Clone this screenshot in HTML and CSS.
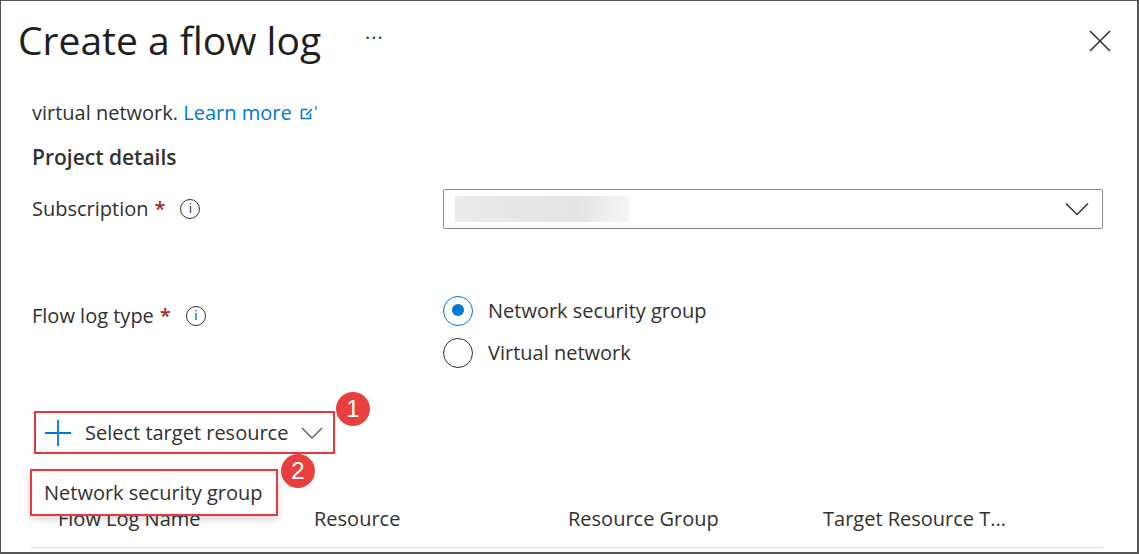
FILE: index.html
```html
<!DOCTYPE html>
<html lang="en">
<head>
<meta charset="utf-8">
<title>Create a flow log</title>
<link rel="stylesheet" href="styles.css">
</head>
<body>
<div class="panel">
  <header class="header">
    <h1 class="title">Create a flow log</h1>
    <span class="more">···</span>
    <span class="spacer"></span>
    <svg class="close" width="22" height="22" viewBox="0 0 22 22"><path d="M1 1L21 21M21 1L1 21" stroke="#323130" stroke-width="1.6" fill="none"/></svg>
  </header>
  <div class="content">
    <p class="desc">virtual network. <a class="link" href="#">Learn more <svg class="ext" width="20" height="16" viewBox="0 0 20 16"><path d="M2.5 4.5h6M2.5 4.5v9h9v-5" stroke="#0078d4" stroke-width="1.6" fill="none"/><path d="M7 10L13 4" stroke="#0078d4" stroke-width="1.6"/><path d="M17 1v4" stroke="#0078d4" stroke-width="1.2"/></svg></a></p>
    <h2 class="section">Project details</h2>
    <div class="row row-sub">
      <div class="label">Subscription <span class="req">*</span><span class="info">i</span></div>
      <div class="control">
        <div class="select">
          <span class="blur"></span>
          <svg class="chev" width="24" height="14" viewBox="0 0 24 14"><path d="M1 1.5L12 12.5L23 1.5" stroke="#323130" stroke-width="1.5" fill="none"/></svg>
        </div>
      </div>
    </div>
    <div class="row row-type">
      <div class="label label-type">Flow log type <span class="req">*</span><span class="info">i</span></div>
      <div class="control radios">
        <div class="radio-item"><span class="radio checked"></span>Network security group</div>
        <div class="radio-item"><span class="radio"></span>Virtual network</div>
      </div>
    </div>
    <div class="target-area">
      <div class="target-btn">
        <svg class="plus" width="26" height="26" viewBox="0 0 26 26"><path d="M13 0v26M0 13h26" stroke="#0078d4" stroke-width="1.8"/></svg>
        <span>Select target resource</span>
        <svg class="chev-small" width="22" height="12" viewBox="0 0 22 12"><path d="M1 1L11 11L21 1" stroke="#605e5c" stroke-width="1.4" fill="none"/></svg>
      </div>
      <span class="badge badge-1">1</span>
      <div class="menu">Network security group</div>
      <span class="badge badge-2">2</span>
    </div>
    <div class="table-head">
      <span class="col col-name">Flow Log Name</span>
      <span class="col col-res">Resource</span>
      <span class="col col-rg">Resource Group</span>
      <span class="col col-tt">Target Resource T...</span>
    </div>
  </div>
</div>
</body>
</html>
```
FILE: styles.css
```css
* { box-sizing: border-box; }
html, body { margin: 0; padding: 0; background: #fff; }
body {
  font-family: "Open Sans", "Noto Sans", sans-serif;
  color: #323130;
}
.panel {
  width: 1139px;
  height: 554px;
  border: 1px solid #555;
  border-right-width: 2px;
  border-bottom-width: 2px;
  overflow: hidden;
  display: flex;
  flex-direction: column;
}
.header {
  display: flex;
  align-items: center;
  height: 80px;
  padding: 0 26px 4px 17px;
}
.title {
  margin: 0;
  font-size: 39px;
  font-weight: 400;
  color: #201f1e;
}
.more {
  margin-left: 44px;
  font-size: 20px;
  letter-spacing: 1px;
  color: #323130;
  padding-bottom: 4px;
}
.spacer { flex: 1; }
.close { display: block; margin-top: 4px; }
.content {
  padding: 0 34px 0 30px;
  flex: 1;
  display: flex;
  flex-direction: column;
}
.desc {
  margin: 18px 0 0 1px;
  font-size: 20px;
  line-height: 28px;
}
.link {
  color: #0078d4;
  text-decoration: none;
}
.ext { vertical-align: -1px; margin-left: 2px; }
.section {
  margin: 16px 0 0 1px;
  font-size: 21px;
  font-weight: 600;
  line-height: 28px;
}
.row {
  display: grid;
  grid-template-columns: 412px 1fr;
}
.row-sub { margin-top: 18px; align-items: center; }
.label {
  font-size: 20px;
  display: flex;
  align-items: center;
  line-height: 28px;
  padding-left: 1px;
}
.req { color: #a4262c; margin-left: 6px; font-weight: 600; }
.info {
  display: inline-flex;
  align-items: center;
  justify-content: center;
  width: 20px;
  height: 20px;
  border: 1.3px solid #323130;
  border-radius: 50%;
  font-size: 12px;
  margin-left: 15px;
  line-height: 1;
  font-family: "DejaVu Sans", sans-serif;
}
.select {
  height: 40px;
  border: 1px solid #8a8886;
  border-radius: 2px;
  display: flex;
  align-items: center;
  padding: 0 13px 0 11px;
}
.blur {
  width: 174px;
  height: 26px;
  background: linear-gradient(90deg, #ececec 0%, #e6e6e6 40%, #e4e4e4 70%, #f6f6f6 100%);
}
.chev { margin-left: auto; }
.row-type { margin-top: 67px; }
.label-type { padding-top: 6px; align-self: start; }
.radios {
  display: flex;
  flex-direction: column;
  gap: 13px;
}
.radio-item {
  display: flex;
  align-items: center;
  font-size: 20px;
  height: 29px;
}
.radio {
  width: 30px;
  height: 30px;
  border-radius: 50%;
  border: 1.4px solid #323130;
  margin-right: 15px;
  position: relative;
  flex: none;
}
.radio.checked { border-color: #0078d4; }
.radio.checked::after {
  content: "";
  position: absolute;
  left: 7.5px;
  top: 7.5px;
  width: 12px;
  height: 12px;
  border-radius: 50%;
  background: #0078d4;
}
.target-area {
  position: relative;
  margin-top: 44px;
  height: 88px;
}
.target-btn {
  display: inline-flex;
  align-items: center;
  margin-left: 3px;
  height: 43px;
  width: 301px;
  border: 2px solid #e8383d;
  padding: 0 0 0 9px;
  font-size: 20px;
  white-space: nowrap;
}
.plus { margin-right: 14px; flex: none; }
.chev-small { margin-left: 13px; flex: none; }
.badge {
  position: absolute;
  width: 34px;
  height: 34px;
  border-radius: 50%;
  background: #e8403f;
  color: #fff;
  font-family: "Liberation Sans", Arial, sans-serif;
  font-size: 24px;
  display: flex;
  align-items: center;
  justify-content: center;
}
.badge-1 { left: 305px; top: -19px; }
.badge-2 { left: 250px; top: 43px; }
.menu {
  position: absolute;
  left: -1px;
  top: 58px;
  width: 248px;
  height: 47px;
  border: 2px solid #e8383d;
  background: #fff;
  box-shadow: 0 3px 8px rgba(0,0,0,0.18);
  font-size: 20px;
  display: flex;
  align-items: center;
  padding-left: 12px;
  white-space: nowrap;
  z-index: 2;
}
.table-head {
  display: flex;
  font-size: 20px;
  border-bottom: 1px solid #e1dfdd;
  height: 43px;
  align-items: flex-start;
  margin-top: 6px;
}
.col { display: block; white-space: nowrap; }
.col-name { width: 283px; padding-left: 27px; }
.col-res { width: 254px; }
.col-rg { width: 255px; }
```
